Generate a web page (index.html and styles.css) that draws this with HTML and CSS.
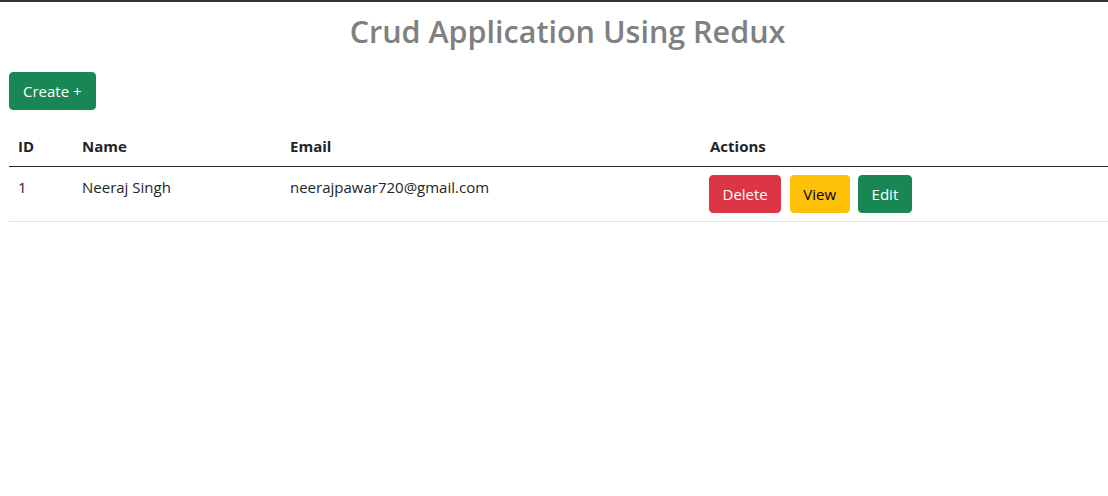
FILE: index.html
```html
<!DOCTYPE html>
<html lang="en">
<head>
<meta charset="utf-8">
<title>Crud Application Using Redux</title>
<link rel="stylesheet" href="styles.css">
</head>
<body>
<div class="app">
  <h2 class="title">Crud Application Using Redux</h2>
  <div class="toolbar">
    <button class="btn btn-success">Create +</button>
  </div>
  <table class="table">
    <thead>
      <tr>
        <th class="c-id">ID</th>
        <th class="c-name">Name</th>
        <th class="c-email">Email</th>
        <th class="c-actions">Actions</th>
      </tr>
    </thead>
    <tbody>
      <tr>
        <td>1</td>
        <td>Neeraj Singh</td>
        <td>neerajpawar720@gmail.com</td>
        <td>
          <div class="actions">
            <button class="btn btn-danger">Delete</button>
            <button class="btn btn-warning">View</button>
            <button class="btn btn-success">Edit</button>
          </div>
        </td>
      </tr>
    </tbody>
  </table>
</div>
</body>
</html>
```
FILE: styles.css
```css
* { box-sizing: border-box; }
html, body { margin: 0; padding: 0; }
body {
  border-top: 2px solid #333;
  font-family: "Open Sans", "Noto Sans", sans-serif;
  font-size: 15px;
  line-height: 1.5;
  color: #212529;
  background: #fff;
}
.app { padding: 0 0 0 9px; }
.title {
  margin: 10px 0 0 0;
  padding-left: 18px;
  text-align: center;
  font-size: 30.5px;
  font-weight: 600;
  line-height: 38px;
  color: #808080;
}
.toolbar { margin-top: 22px; display: flex; }
.btn {
  font-family: inherit;
  font-size: 15px;
  line-height: 24px;
  padding: 7px 12px;
  border: 1px solid transparent;
  border-radius: 4px;
  cursor: pointer;
}
.btn-success { background: #198754; border-color: #198754; color: #fff; }
.btn-danger { background: #dc3545; border-color: #dc3545; color: #fff; }
.btn-warning { background: #ffc107; border-color: #ffc107; color: #000; }
.toolbar .btn { padding: 6px 13px; }
.table {
  margin-top: 16px;
  width: 100%;
  border-collapse: collapse;
}
.table th, .table td {
  text-align: left;
  vertical-align: top;
  padding: 8px 8px 8px 9px;
  line-height: 24px;
}
.table th { font-weight: 700; border-bottom: 1px solid #212529; }
.table td { border-bottom: 1px solid #dee2e6; }
.c-id { width: 64px; }
.c-name { width: 208px; }
.c-email { width: 420px; }
.actions { display: flex; gap: 8.5px; margin-left: -1px; }
.actions .btn { padding: 6px 12.5px; }
```
